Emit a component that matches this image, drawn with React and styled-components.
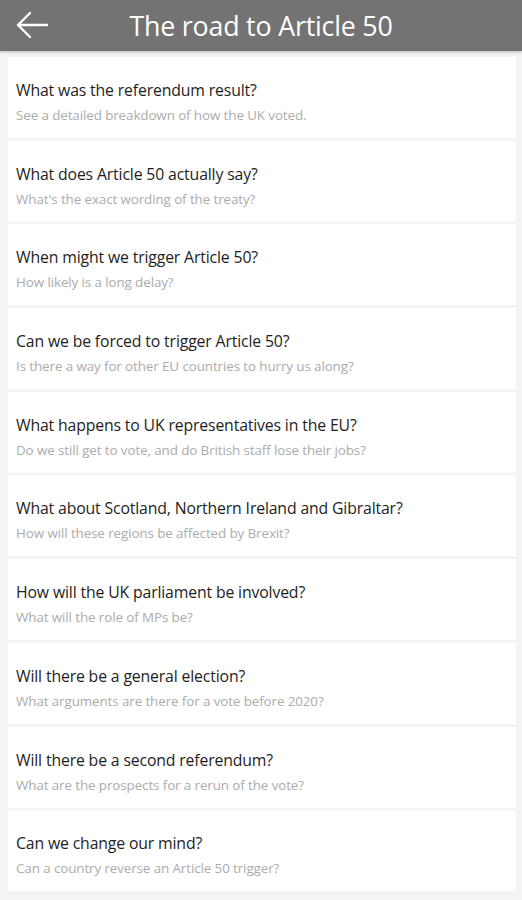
import React from "react";
import styled, { createGlobalStyle } from "styled-components";

const Global = createGlobalStyle`
  html, body { margin: 0; padding: 0; background: #f4f4f4; }
  body { font-family: "Open Sans", "Noto Sans", "Liberation Sans", sans-serif; }
  * { box-sizing: border-box; }
`;

const Page = styled.div`
  width: 522px;
  min-height: 900px;
  background: #f4f4f4;
  display: flex;
  flex-direction: column;
`;

const Header = styled.header`
  height: 51px;
  background: #737373;
  display: flex;
  align-items: center;
  position: relative;
  box-shadow: 0 1px 3px rgba(0, 0, 0, 0.25);
  z-index: 1;
`;

const BackButton = styled.button`
  position: absolute;
  left: 14px;
  top: 8px;
  width: 36px;
  height: 34px;
  border: 0;
  padding: 0;
  background: transparent;
  display: flex;
  align-items: center;
  justify-content: center;
`;

const Title = styled.h1`
  flex: 1;
  margin: 0;
  text-align: center;
  color: #fff;
  font-weight: 400;
  font-size: 26.8px;
  letter-spacing: -0.2px;
  line-height: 51px;
`;

const List = styled.div`
  display: flex;
  flex-direction: column;
  gap: 2.7px;
  padding: 6px 6px 0 8px;
`;

const Card = styled.div`
  height: 81px;
  background: #fff;
  padding: 23px 8px 0 8px;
`;

const Question = styled.div`
  color: #1e1e1e;
  font-size: 15.8px;
  line-height: 20px;
  letter-spacing: -0.15px;
  white-space: nowrap;
`;

const Sub = styled.div`
  margin-top: 7px;
  color: #acacac;
  font-size: 13.4px;
  line-height: 16px;
  letter-spacing: -0.1px;
  white-space: nowrap;
`;

const items = [
  ["What was the referendum result?", "See a detailed breakdown of how the UK voted."],
  ["What does Article 50 actually say?", "What's the exact wording of the treaty?"],
  ["When might we trigger Article 50?", "How likely is a long delay?"],
  ["Can we be forced to trigger Article 50?", "Is there a way for other EU countries to hurry us along?"],
  ["What happens to UK representatives in the EU?", "Do we still get to vote, and do British staff lose their jobs?"],
  ["What about Scotland, Northern Ireland and Gibraltar?", "How will these regions be affected by Brexit?"],
  ["How will the UK parliament be involved?", "What will the role of MPs be?"],
  ["Will there be a general election?", "What arguments are there for a vote before 2020?"],
  ["Will there be a second referendum?", "What are the prospects for a rerun of the vote?"],
  ["Can we change our mind?", "Can a country reverse an Article 50 trigger?"],
];

export default function App() {
  return (
    <Page>
      <Global />
      <Header>
        <BackButton aria-label="Back">
          <svg width="34" height="30" viewBox="0 0 34 30" fill="none">
            <path d="M32 15H3M15 3L3 15l12 12" stroke="#fff" strokeWidth="2.4" strokeLinecap="round" strokeLinejoin="round" />
          </svg>
        </BackButton>
        <Title>The road to Article 50</Title>
      </Header>
      <List>
        {items.map(([q, s]) => (
          <Card key={q}>
            <Question>{q}</Question>
            <Sub>{s}</Sub>
          </Card>
        ))}
      </List>
    </Page>
  );
}
